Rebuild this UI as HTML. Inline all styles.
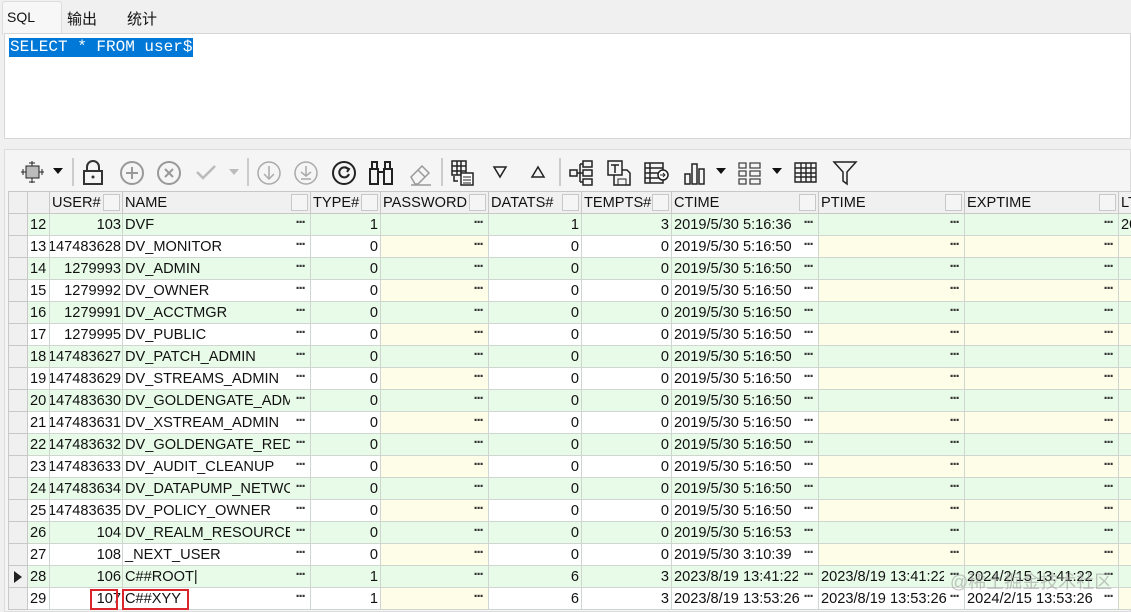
<!DOCTYPE html>
<html><head><meta charset="utf-8"><style>
*{box-sizing:border-box;margin:0;padding:0}
body{width:1131px;height:612px;overflow:hidden;background:#f0f0f0;font-family:"Liberation Sans","Microsoft YaHei","Noto Sans CJK SC",sans-serif;font-size:14.6px;color:#111;position:relative}
.tabs{position:absolute;left:0;top:0;width:1131px;height:34px;background:#f0f0f0}
.tab{position:absolute;top:8px;font-size:15px;font-family:"Liberation Sans","Noto Sans CJK SC",sans-serif}
.tabsel{position:absolute;left:2px;top:1px;width:60px;height:34px;background:#f7f7f7;border:1px solid #dcdcdc;border-bottom:none;border-radius:3px 3px 0 0}
.editor{position:absolute;left:4px;top:33px;width:1127px;height:106px;background:#fff;border:1px solid #d6d6d6}
.sql{position:absolute;left:4px;top:4px;background:#0078d7;color:#fff;font-family:"Liberation Mono",monospace;font-size:16px;line-height:19px;padding:0 1px 0 1px}
.panel{position:absolute;left:4px;top:149px;width:1127px;height:463px;background:#f5f5f5;border:1px solid #dcdcdc}
.tb{position:absolute;left:0;top:150px;width:1131px;height:40px}
.tb svg{position:absolute}
table{position:absolute;left:8px;top:191px;border-collapse:collapse;table-layout:fixed;width:1130px;background:#fff}
td,th{height:22px;border:1px solid #cfd6cf;white-space:nowrap;overflow:hidden;font-weight:normal;padding:0 2px;line-height:20px;position:relative}
th{background:#f0f0f0;text-align:left;border-color:#c8c8c8}
th b{position:absolute;right:2px;top:2px;width:17px;height:17px;border:1px solid #c8c8c8;background:#f5f5f5}
td.r{text-align:right}
td.u{direction:rtl;text-align:right;padding:0 1px}
td.i{background:#f0f0f0;border-color:#c8c8c8}
tr.g td{background:#e8fbe8}
tr.g td.i{background:#f0f0f0}
tr.w td.y{background:#fdfde8}
td.e s{position:absolute;right:0;top:0;width:20px;height:20px;text-decoration:none;background:inherit;text-align:center;font-size:15px;font-weight:bold;letter-spacing:-2px;line-height:18px;color:#333}
.box{position:absolute;border:2px solid #d9262c}
</style></head><body>
<div class="tabs">
<div class="tabsel"></div>
<div class="tab" style="left:7px;top:9px;font-size:14px">SQL</div>
<div class="tab" style="left:67px">输出</div>
<div class="tab" style="left:127px">统计</div>
</div>
<div class="editor"><div class="sql">SELECT * FROM user$</div></div>
<div class="panel"></div>
<div class="tb">
<svg style="left:20px;top:10px" width="26" height="26" viewBox="0 0 26 26"><rect x="6" y="6" width="13" height="12" fill="#bbb" stroke="#222"/><path d="M12 1v5M12 18v5M1 12h5M19 12h5M9 3h6M9 22h6M3 9v6M22 9v6" stroke="#222"/></svg>
<svg style="left:52px;top:17px" width="12" height="8"><path d="M1 1h10L6 7z" fill="#111"/></svg>
<svg style="left:72px;top:8px" width="2" height="28"><rect width="2" height="28" fill="#ccc"/></svg>
<svg style="left:82px;top:10px" width="22" height="26" viewBox="0 0 22 26"><path d="M5 11V7a6 6 0 0 1 12 0v4" fill="none" stroke="#333" stroke-width="2"/><rect x="2" y="11" width="18" height="13" fill="none" stroke="#333" stroke-width="2"/><circle cx="11" cy="17" r="1.5" fill="#333"/></svg>
<svg style="left:119px;top:10px" width="26" height="26"><circle cx="13" cy="13" r="11" fill="none" stroke="#999" stroke-width="2"/><path d="M13 7v12M7 13h12" stroke="#999" stroke-width="2"/></svg>
<svg style="left:156px;top:10px" width="26" height="26"><circle cx="13" cy="13" r="11" fill="none" stroke="#999" stroke-width="2"/><path d="M9 9l8 8M17 9l-8 8" stroke="#999" stroke-width="2"/></svg>
<svg style="left:195px;top:12px" width="22" height="20"><path d="M2 10l6 6L20 4" fill="none" stroke="#bbb" stroke-width="2.5"/></svg>
<svg style="left:228px;top:18px" width="12" height="8"><path d="M1 1h10L6 7z" fill="#bbb"/></svg>
<svg style="left:247px;top:8px" width="2" height="28"><rect width="2" height="28" fill="#ccc"/></svg>
<svg style="left:256px;top:10px" width="26" height="26"><circle cx="13" cy="13" r="11" fill="none" stroke="#aaa" stroke-width="1.5"/><path d="M13 6v13M8 14l5 5 5-5" fill="none" stroke="#aaa" stroke-width="1.5"/></svg>
<svg style="left:293px;top:10px" width="26" height="26"><circle cx="13" cy="13" r="11" fill="none" stroke="#aaa" stroke-width="1.5"/><path d="M13 6v10M8 12l5 4 5-4M8 19h10" fill="none" stroke="#aaa" stroke-width="1.5"/></svg>
<svg style="left:331px;top:10px" width="26" height="26"><circle cx="13" cy="13" r="11" fill="none" stroke="#222" stroke-width="2"/><path d="M17 9a5 5 0 1 0 1 5" fill="none" stroke="#222" stroke-width="2"/><path d="M14 7l4 2-2 3" fill="none" stroke="#222" stroke-width="2"/></svg>
<svg style="left:368px;top:9px" width="26" height="28"><rect x="2" y="10" width="8" height="15" fill="none" stroke="#222" stroke-width="2"/><rect x="16" y="10" width="8" height="15" fill="none" stroke="#222" stroke-width="2"/><rect x="4" y="3" width="5" height="7" fill="none" stroke="#222" stroke-width="2"/><rect x="17" y="3" width="5" height="7" fill="none" stroke="#222" stroke-width="2"/><path d="M10 13h6" stroke="#222" stroke-width="2"/></svg>
<svg style="left:407px;top:10px" width="26" height="26"><path d="M4 17L15 6l7 7-11 11H8z M11 10l7 7M4 25h20" fill="none" stroke="#999" stroke-width="1.5"/></svg>
<svg style="left:441px;top:8px" width="2" height="28"><rect width="2" height="28" fill="#ccc"/></svg>
<svg style="left:450px;top:9px" width="26" height="28"><path d="M2 2h14v14H2zM2 7h14M2 12h14M7 2v14M11 2v14" fill="none" stroke="#222" stroke-width="1.5"/><path d="M4 17v5h4" fill="none" stroke="#222" stroke-width="1.5"/><rect x="11" y="14" width="12" height="12" fill="#fff" stroke="#222" stroke-width="1.5"/><path d="M13 18h8M13 21h8M13 24h8" stroke="#222"/></svg>
<svg style="left:492px;top:15px" width="16" height="14"><path d="M2 2h12L8 12z" fill="none" stroke="#222" stroke-width="1.5"/></svg>
<svg style="left:530px;top:15px" width="16" height="14"><path d="M2 12h12L8 2z" fill="none" stroke="#222" stroke-width="1.5"/></svg>
<svg style="left:559px;top:8px" width="2" height="28"><rect width="2" height="28" fill="#ccc"/></svg>
<svg style="left:568px;top:9px" width="26" height="28"><rect x="2" y="11" width="7" height="6" fill="none" stroke="#222" stroke-width="1.5"/><rect x="15" y="2" width="9" height="6" fill="none" stroke="#222" stroke-width="1.5"/><rect x="15" y="11" width="9" height="6" fill="none" stroke="#222" stroke-width="1.5"/><rect x="15" y="20" width="9" height="6" fill="none" stroke="#222" stroke-width="1.5"/><path d="M9 14h6M12 5v18M12 5h3M12 23h3" fill="none" stroke="#222" stroke-width="1.5"/></svg>
<svg style="left:606px;top:9px" width="26" height="28"><rect x="2" y="2" width="14" height="14" fill="none" stroke="#222" stroke-width="1.5"/><path d="M5 6h8M9 6v8" stroke="#222" stroke-width="1.5"/><path d="M8 16v10h16V14l-3-3h-5" fill="none" stroke="#222" stroke-width="1.5"/><rect x="12" y="20" width="8" height="6" fill="none" stroke="#222"/></svg>
<svg style="left:643px;top:10px" width="28" height="26"><path d="M2 3h18v20H2zM2 8h18M2 13h18M2 18h18M7 3v20" fill="none" stroke="#222" stroke-width="1.5"/><circle cx="20" cy="15" r="5" fill="#fff" stroke="#222" stroke-width="1.5"/><path d="M17 15h5M20 13l2 2-2 2" fill="none" stroke="#222"/></svg>
<svg style="left:683px;top:10px" width="24" height="26"><rect x="2" y="14" width="5" height="10" fill="none" stroke="#222" stroke-width="1.5"/><rect x="9" y="4" width="5" height="20" fill="none" stroke="#222" stroke-width="1.5"/><rect x="16" y="9" width="5" height="15" fill="none" stroke="#222" stroke-width="1.5"/></svg>
<svg style="left:715px;top:17px" width="12" height="8"><path d="M1 1h10L6 7z" fill="#111"/></svg>
<svg style="left:737px;top:10px" width="26" height="26"><path d="M2 3h7v5H2zM2 11h7v5H2zM2 19h7v5H2zM13 3h10v5H13zM13 11h10v5H13zM13 19h10v5H13z" fill="none" stroke="#444" stroke-width="1.3"/></svg>
<svg style="left:771px;top:17px" width="12" height="8"><path d="M1 1h10L6 7z" fill="#111"/></svg>
<svg style="left:793px;top:11px" width="26" height="24"><path d="M2 2h21v19H2zM2 7h21M2 12h21M2 16h21M8 2v19M13 2v19M18 2v19" fill="none" stroke="#222" stroke-width="1.4"/></svg>
<svg style="left:832px;top:10px" width="26" height="26"><path d="M2 2h22l-9 10v12l-4-3v-9z" fill="none" stroke="#222" stroke-width="1.5"/></svg>
</div>
<table>
<colgroup><col style="width:19px"><col style="width:22px"><col style="width:73px"><col style="width:188px"><col style="width:70px"><col style="width:108px"><col style="width:93px"><col style="width:90px"><col style="width:147px"><col style="width:146px"><col style="width:154px"><col style="width:20px"></colgroup>
<tr><th></th><th></th><th>USER#<b></b></th><th>NAME<b></b></th><th>TYPE#<b></b></th><th>PASSWORD<b></b></th><th>DATATS#<b></b></th><th>TEMPTS#<b></b></th><th>CTIME<b></b></th><th>PTIME<b></b></th><th>EXPTIME<b></b></th><th>LT</th></tr>
<tr class="g"><td class="i"></td><td>12</td><td class="u">103</td><td class="e">DVF<s>···</s></td><td class="r">1</td><td class="e y"><s>···</s></td><td class="r">1</td><td class="r">3</td><td class="e">2019/5/30 5:16:36<s>···</s></td><td class="e y"><s>···</s></td><td class="e y"><s>···</s></td><td>20</td></tr>
<tr class="w"><td class="i"></td><td>13</td><td class="u">2147483628</td><td class="e">DV_MONITOR<s>···</s></td><td class="r">0</td><td class="e y"><s>···</s></td><td class="r">0</td><td class="r">0</td><td class="e">2019/5/30 5:16:50<s>···</s></td><td class="e y"><s>···</s></td><td class="e y"><s>···</s></td><td class="y"></td></tr>
<tr class="g"><td class="i"></td><td>14</td><td class="u">1279993</td><td class="e">DV_ADMIN<s>···</s></td><td class="r">0</td><td class="e y"><s>···</s></td><td class="r">0</td><td class="r">0</td><td class="e">2019/5/30 5:16:50<s>···</s></td><td class="e y"><s>···</s></td><td class="e y"><s>···</s></td><td></td></tr>
<tr class="w"><td class="i"></td><td>15</td><td class="u">1279992</td><td class="e">DV_OWNER<s>···</s></td><td class="r">0</td><td class="e y"><s>···</s></td><td class="r">0</td><td class="r">0</td><td class="e">2019/5/30 5:16:50<s>···</s></td><td class="e y"><s>···</s></td><td class="e y"><s>···</s></td><td class="y"></td></tr>
<tr class="g"><td class="i"></td><td>16</td><td class="u">1279991</td><td class="e">DV_ACCTMGR<s>···</s></td><td class="r">0</td><td class="e y"><s>···</s></td><td class="r">0</td><td class="r">0</td><td class="e">2019/5/30 5:16:50<s>···</s></td><td class="e y"><s>···</s></td><td class="e y"><s>···</s></td><td></td></tr>
<tr class="w"><td class="i"></td><td>17</td><td class="u">1279995</td><td class="e">DV_PUBLIC<s>···</s></td><td class="r">0</td><td class="e y"><s>···</s></td><td class="r">0</td><td class="r">0</td><td class="e">2019/5/30 5:16:50<s>···</s></td><td class="e y"><s>···</s></td><td class="e y"><s>···</s></td><td class="y"></td></tr>
<tr class="g"><td class="i"></td><td>18</td><td class="u">2147483627</td><td class="e">DV_PATCH_ADMIN<s>···</s></td><td class="r">0</td><td class="e y"><s>···</s></td><td class="r">0</td><td class="r">0</td><td class="e">2019/5/30 5:16:50<s>···</s></td><td class="e y"><s>···</s></td><td class="e y"><s>···</s></td><td></td></tr>
<tr class="w"><td class="i"></td><td>19</td><td class="u">2147483629</td><td class="e">DV_STREAMS_ADMIN<s>···</s></td><td class="r">0</td><td class="e y"><s>···</s></td><td class="r">0</td><td class="r">0</td><td class="e">2019/5/30 5:16:50<s>···</s></td><td class="e y"><s>···</s></td><td class="e y"><s>···</s></td><td class="y"></td></tr>
<tr class="g"><td class="i"></td><td>20</td><td class="u">2147483630</td><td class="e">DV_GOLDENGATE_ADMIN<s>···</s></td><td class="r">0</td><td class="e y"><s>···</s></td><td class="r">0</td><td class="r">0</td><td class="e">2019/5/30 5:16:50<s>···</s></td><td class="e y"><s>···</s></td><td class="e y"><s>···</s></td><td></td></tr>
<tr class="w"><td class="i"></td><td>21</td><td class="u">2147483631</td><td class="e">DV_XSTREAM_ADMIN<s>···</s></td><td class="r">0</td><td class="e y"><s>···</s></td><td class="r">0</td><td class="r">0</td><td class="e">2019/5/30 5:16:50<s>···</s></td><td class="e y"><s>···</s></td><td class="e y"><s>···</s></td><td class="y"></td></tr>
<tr class="g"><td class="i"></td><td>22</td><td class="u">2147483632</td><td class="e">DV_GOLDENGATE_REDO_ACCESS<s>···</s></td><td class="r">0</td><td class="e y"><s>···</s></td><td class="r">0</td><td class="r">0</td><td class="e">2019/5/30 5:16:50<s>···</s></td><td class="e y"><s>···</s></td><td class="e y"><s>···</s></td><td></td></tr>
<tr class="w"><td class="i"></td><td>23</td><td class="u">2147483633</td><td class="e">DV_AUDIT_CLEANUP<s>···</s></td><td class="r">0</td><td class="e y"><s>···</s></td><td class="r">0</td><td class="r">0</td><td class="e">2019/5/30 5:16:50<s>···</s></td><td class="e y"><s>···</s></td><td class="e y"><s>···</s></td><td class="y"></td></tr>
<tr class="g"><td class="i"></td><td>24</td><td class="u">2147483634</td><td class="e">DV_DATAPUMP_NETWORK<s>···</s></td><td class="r">0</td><td class="e y"><s>···</s></td><td class="r">0</td><td class="r">0</td><td class="e">2019/5/30 5:16:50<s>···</s></td><td class="e y"><s>···</s></td><td class="e y"><s>···</s></td><td></td></tr>
<tr class="w"><td class="i"></td><td>25</td><td class="u">2147483635</td><td class="e">DV_POLICY_OWNER<s>···</s></td><td class="r">0</td><td class="e y"><s>···</s></td><td class="r">0</td><td class="r">0</td><td class="e">2019/5/30 5:16:50<s>···</s></td><td class="e y"><s>···</s></td><td class="e y"><s>···</s></td><td class="y"></td></tr>
<tr class="g"><td class="i"></td><td>26</td><td class="u">104</td><td class="e">DV_REALM_RESOURCE<s>···</s></td><td class="r">0</td><td class="e y"><s>···</s></td><td class="r">0</td><td class="r">0</td><td class="e">2019/5/30 5:16:53<s>···</s></td><td class="e y"><s>···</s></td><td class="e y"><s>···</s></td><td></td></tr>
<tr class="w"><td class="i"></td><td>27</td><td class="u">108</td><td class="e">_NEXT_USER<s>···</s></td><td class="r">0</td><td class="e y"><s>···</s></td><td class="r">0</td><td class="r">0</td><td class="e">2019/5/30 3:10:39<s>···</s></td><td class="e y"><s>···</s></td><td class="e y"><s>···</s></td><td class="y"></td></tr>
<tr class="g"><td class="i"><svg width="10" height="12" style="position:absolute;left:4px;top:5px"><path d="M1 0l8 6-8 6z" fill="#222"/></svg></td><td>28</td><td class="u">106</td><td class="e">C##ROOT|<s>···</s></td><td class="r">1</td><td class="e y"><s>···</s></td><td class="r">6</td><td class="r">3</td><td class="e">2023/8/19 13:41:22<s>···</s></td><td class="e">2023/8/19 13:41:22<s>···</s></td><td class="e">2024/2/15 13:41:22<s>···</s></td><td></td></tr>
<tr class="w"><td class="i"></td><td>29</td><td class="u">107</td><td class="e">C##XYY<s>···</s></td><td class="r">1</td><td class="e y"><s>···</s></td><td class="r">6</td><td class="r">3</td><td class="e">2023/8/19 13:53:26<s>···</s></td><td class="e">2023/8/19 13:53:26<s>···</s></td><td class="e">2024/2/15 13:53:26<s>···</s></td><td class="y"></td></tr>
</table>
<div class="box" style="left:90px;top:589px;width:28px;height:21px"></div>
<div class="box" style="left:122px;top:589px;width:67px;height:21px"></div>
<div style="position:absolute;left:950px;top:568px;font-size:18px;color:rgba(150,150,150,0.55);font-family:'Liberation Sans','Noto Sans CJK SC',sans-serif">@稀土掘金技术社区</div>
</body></html>
